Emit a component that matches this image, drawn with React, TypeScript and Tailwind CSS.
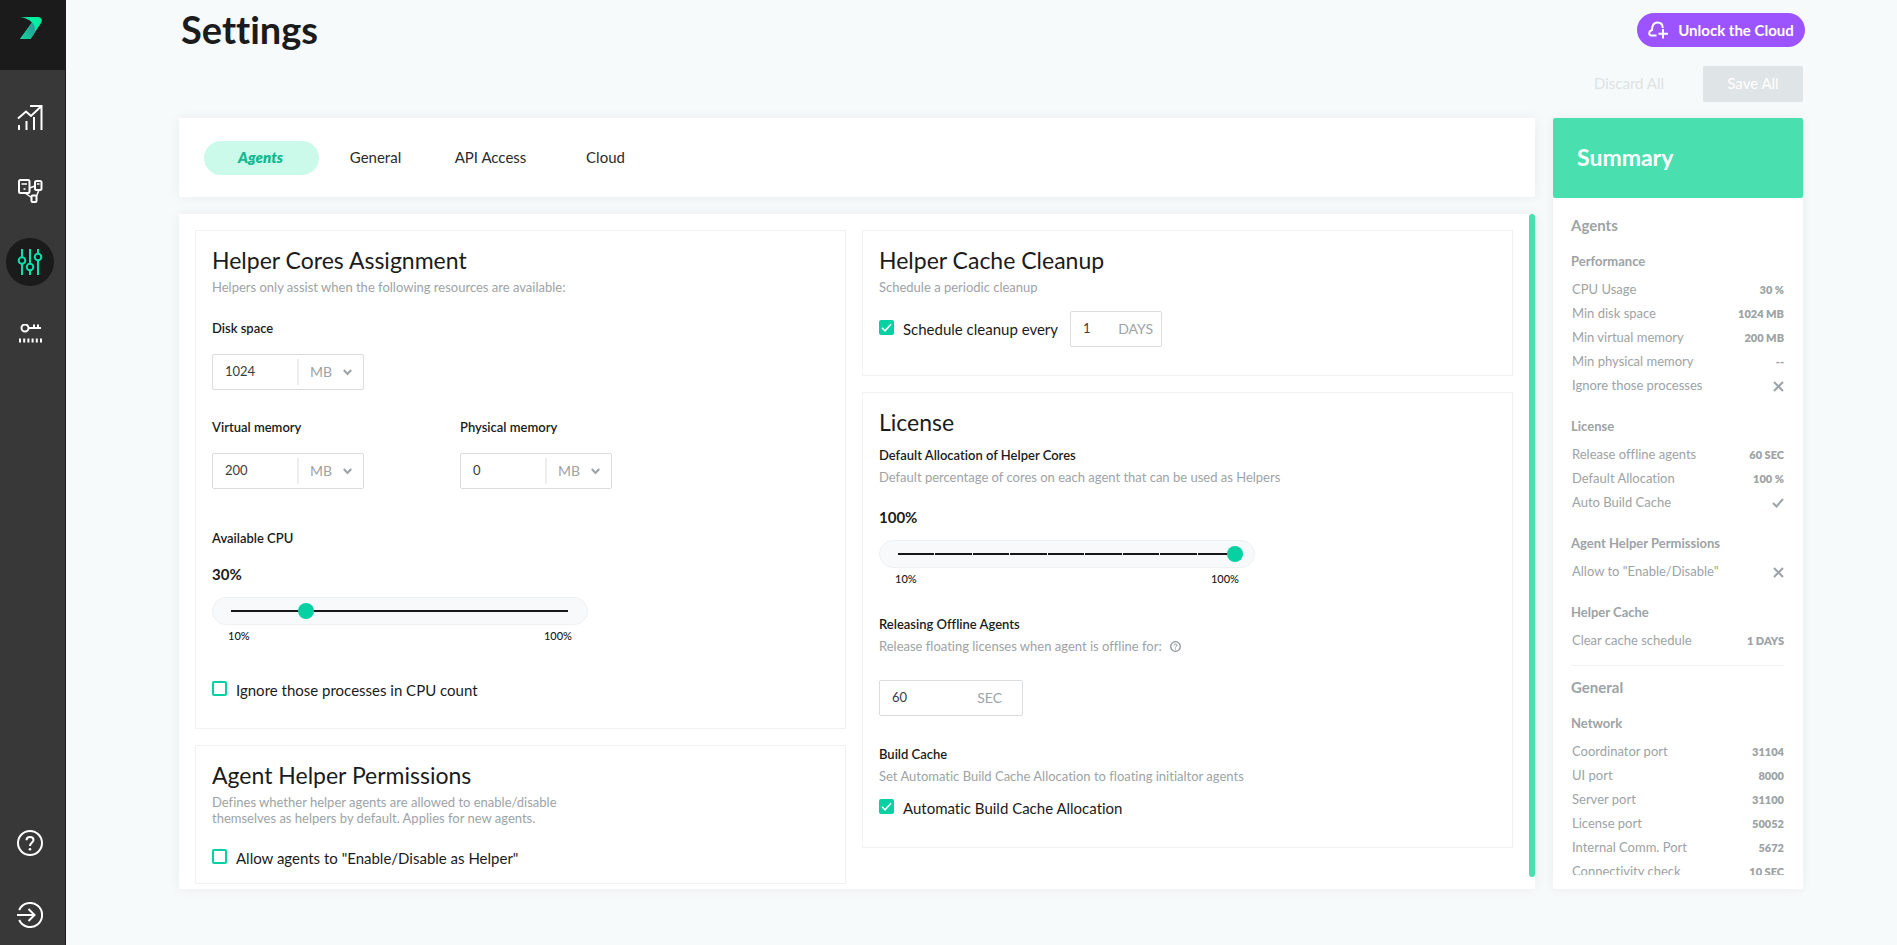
import { useState } from 'react';
import type { ReactNode } from 'react';

type SummaryRow = {
  label: string;
  value: string;
}

type SummaryGroup = {
  title: string;
  rows: SummaryRow[];
}

const agentGroups: SummaryGroup[] = [
  {
    title: 'Performance',
    rows: [
      { label: 'CPU Usage', value: '30 %' },
      { label: 'Min disk space', value: '1024 MB' },
      { label: 'Min virtual memory', value: '200 MB' },
      { label: 'Min physical memory', value: '--' },
      { label: 'Ignore those processes', value: 'off' },
    ],
  },
  {
    title: 'License',
    rows: [
      { label: 'Release offline agents', value: '60 SEC' },
      { label: 'Default Allocation', value: '100 %' },
      { label: 'Auto Build Cache', value: 'on' },
    ],
  },
  {
    title: 'Agent Helper Permissions',
    rows: [{ label: 'Allow to "Enable/Disable"', value: 'off' }],
  },
  {
    title: 'Helper Cache',
    rows: [{ label: 'Clear cache schedule', value: '1 DAYS' }],
  },
];

const generalGroups: SummaryGroup[] = [
  {
    title: 'Network',
    rows: [
      { label: 'Coordinator port', value: '31104' },
      { label: 'UI port', value: '8000' },
      { label: 'Server port', value: '31100' },
      { label: 'License port', value: '50052' },
      { label: 'Internal Comm. Port', value: '5672' },
      { label: 'Connectivity check', value: '10 SEC' },
    ],
  },
];

const tabs = ['Agents', 'General', 'API Access', 'Cloud'];

function Sidebar() {
  return (
    <nav className="flex w-[66px] shrink-0 flex-col border-r border-[#1b1b1b] bg-[#383838] text-white">
      <a href="#" aria-label="Home" className="flex h-[70px] shrink-0 bg-[#1b1b1b] pt-4 pl-[19px]">
        <svg width="23" height="24" viewBox="0 0 23 24">
          <defs>
            <linearGradient id="logoTop" x1="0" y1="0" x2="1" y2="0">
              <stop offset="0" stopColor="#0b9f77" />
              <stop offset="0.4" stopColor="#00f0a0" />
              <stop offset="1" stopColor="#00eda3" />
            </linearGradient>
            <linearGradient id="logoLeg" x1="1" y1="0" x2="0" y2="1">
              <stop offset="0" stopColor="#3a8f9c" />
              <stop offset="0.5" stopColor="#1fb597" />
              <stop offset="1" stopColor="#10dba0" />
            </linearGradient>
          </defs>
          <path d="M0 1H19C22 1 24 4 22 7L11.500 23H1L13 6.500C10 3 5 1.500 0 1Z" fill="url(#logoTop)" />
          <path d="M13 6.500C16 9.500 16.500 13 15.500 17L11.500 23H1Z" fill="url(#logoLeg)" />
        </svg>
      </a>
      <div className="flex flex-1 flex-col items-center pt-6 pr-[5px] pb-[6px]">
        <a href="#" aria-label="Dashboard" className="flex size-12 items-center justify-center">
          <svg width="26" height="26" viewBox="0 0 26 26" fill="none" stroke="currentColor" strokeWidth="2">
            <path d="M1 13.500 9 6.500 14 11 24 1.500M13 1H24.500V25M2 20V25M9.500 16V25M17 12V25" />
          </svg>
        </a>
        <a href="#" aria-label="Agents" className="mt-6 flex size-12 items-center justify-center">
          <svg width="26" height="26" viewBox="0 0 26 26" fill="none" stroke="currentColor" strokeWidth="2">
            <rect x="2" y="3" width="10.500" height="13" rx="1.500" />
            <rect x="18" y="4" width="6.500" height="9" rx="1.500" />
            <rect x="14.500" y="18.500" width="5" height="6.500" rx="1" />
            <path d="M12.500 11 18 9M8 16 14.500 20.500M22 13 19.500 19M4.500 7H10M6.500 12H8.500M20 7H22.500" strokeWidth="1.500" />
          </svg>
        </a>
        <a href="#" aria-label="Settings" className="mt-6 flex size-12 items-center justify-center rounded-full bg-[#1b1b1b] text-[#0be0ad]">
          <svg width="26" height="28" viewBox="0 0 26 28" fill="none" stroke="currentColor" strokeWidth="2">
            <path d="M5 1V9M5 16V27M13 1V15M13 22V27M21 1V6M21 13V27" />
            <circle cx="5" cy="12.500" r="3.300" />
            <circle cx="13" cy="19" r="3.300" />
            <circle cx="21" cy="9" r="3.300" />
          </svg>
        </a>
        <a href="#" aria-label="License" className="mt-6 flex size-12 items-center justify-center">
          <svg width="24" height="20" viewBox="0 0 24 20" fill="none" stroke="currentColor" strokeWidth="2">
            <circle cx="7" cy="4" r="3.500" />
            <path d="M11 4H23M16 4V0.500M20 4V0.500" />
            <path d="M1 16.500H24" strokeWidth="4" strokeDasharray="2 2.200" />
          </svg>
        </a>
        <a href="#" aria-label="Help" className="mt-auto flex size-12 items-center justify-center">
          <svg width="26" height="26" viewBox="0 0 26 26" fill="none" stroke="currentColor" strokeWidth="2">
            <circle cx="13" cy="13" r="12" />
            <path d="M9.500 10.200C9.500 8 11 6.900 13 6.900S16.500 8.100 16.500 10C16.500 12.500 13 12.500 13 16" />
            <circle cx="13" cy="19.200" r="1.300" fill="currentColor" stroke="none" />
          </svg>
        </a>
        <a href="#" aria-label="Log out" className="mt-6 flex size-12 items-center justify-center">
          <svg width="26" height="26" viewBox="0 0 26 26" fill="none" stroke="currentColor" strokeWidth="2">
            <path d="M2.200 8A12 12 0 1 1 2.200 18M0 13H17M11.500 7 17.500 13 11.500 19" />
          </svg>
        </a>
      </div>
    </nav>
  );
}

function Panel({ title, className, children }: { title: string; className: string; children: ReactNode }) {
  return (
    <section className={`border border-[#eff1f2] px-4 pt-[15px] ${className}`}>
      <h2 className="text-[23px] leading-7">{title}</h2>
      {children}
    </section>
  );
}

function Hint({ children }: { children: ReactNode }) {
  return <p className="text-[13px] leading-4 text-[#9da3a6]">{children}</p>;
}

function SizeField({ id, label, initial }: { id: string; label: string; initial: string }) {
  const [value, setValue] = useState(initial);

  return (
    <div className="w-[152px]">
      <label htmlFor={id} className="block text-[13px] leading-4 font-semibold">{label}</label>
      <div className="mt-[18px] flex h-9 items-center rounded-xs border border-[#d9dde0]">
        <input
          id={id}
          value={value}
          onChange={(e) => setValue(e.target.value)}
          className="w-[84px] pl-3 text-[13px] text-[#3c3c3c] outline-none"
        />
        <div className="relative flex h-[26px] flex-1 items-center border-l-2 border-[#eceeef] text-[#9da3a6]">
          <select aria-label={`${label} unit`} className="w-full appearance-none pl-[11px] text-sm outline-none">
            <option>MB</option>
            <option>GB</option>
          </select>
          <svg className="pointer-events-none absolute right-[11px]" width="9" height="7" viewBox="0 0 9 7" fill="none" stroke="currentColor" strokeWidth="2">
            <path d="M0.800 1 4.500 5 8.200 1" />
          </svg>
        </div>
      </div>
    </div>
  );
}

function UnitField({ label, initial, unit, className }: { label: string; initial: string; unit: string; className: string }) {
  const [value, setValue] = useState(initial);

  return (
    <div className={`flex h-9 items-center rounded-xs border border-[#d9dde0] pl-3 ${className}`}>
      <input
        aria-label={label}
        value={value}
        onChange={(e) => setValue(e.target.value)}
        className="w-0 flex-1 text-[13px] text-[#3c3c3c] outline-none"
      />
      <span className="text-sm text-[#9da3a6]">{unit}</span>
    </div>
  );
}

function CheckField({ label, initial = false }: { label: string; initial?: boolean }) {
  const [checked, setChecked] = useState(initial);

  return (
    <label className="flex w-fit items-start gap-[9px] text-[15px] leading-[18px]">
      <span className="relative flex">
        <input
          type="checkbox"
          checked={checked}
          onChange={() => setChecked(!checked)}
          className="size-[15px] appearance-none rounded-xs border-2 border-[#06d1a3] checked:bg-[#06d1a3]"
        />
        {checked && (
          <svg className="pointer-events-none absolute inset-0" width="15" height="15" viewBox="0 0 15 15" fill="none" stroke="white" strokeWidth="1.500">
            <path d="M3 7.800 6 10.800 12 4.200" />
          </svg>
        )}
      </span>
      {label}
    </label>
  );
}

function PercentSlider({ label, initial, ticks = false }: { label: string; initial: number; ticks?: boolean }) {
  const [value, setValue] = useState(initial);

  return (
    <div className="w-[376px]">
      <output className="block text-[15px] leading-[18px] font-bold">{value}%</output>
      <div className="mt-[14px] flex h-7 items-center rounded-full border border-[#eef1f2] bg-[#f7f9fa] pr-[11px] pl-2.5">
        <input
          type="range"
          aria-label={label}
          min={10}
          max={100}
          step={10}
          value={value}
          onChange={(e) => setValue(Number(e.target.value))}
          className={`h-4 w-full appearance-none bg-[length:calc(100%-16px)_2px] bg-center bg-no-repeat [&::-webkit-slider-thumb]:size-4 [&::-webkit-slider-thumb]:appearance-none [&::-webkit-slider-thumb]:rounded-full [&::-webkit-slider-thumb]:bg-[#06d1a3] ${
            ticks
              ? 'bg-[repeating-linear-gradient(to_right,#171717_0,#171717_calc(11.11%-1px),#f7f9fa_calc(11.11%-1px),#f7f9fa_11.11%)]'
              : 'bg-[linear-gradient(#171717,#171717)]'
          }`}
        />
      </div>
      <div className="mt-[3px] flex justify-between px-4 text-[11px] leading-4 font-medium">
        <span>10%</span>
        <span>100%</span>
      </div>
    </div>
  );
}

function SummaryValue({ value }: { value: string }) {
  if (value === 'off') {
    return (
      <svg role="img" aria-label="Off" width="11" height="11" viewBox="0 0 11 11" fill="none" stroke="currentColor" strokeWidth="2">
        <path d="M1 1 10 10M10 1 1 10" />
      </svg>
    );
  }
  if (value === 'on') {
    return (
      <svg role="img" aria-label="On" width="12" height="10" viewBox="0 0 12 10" fill="none" stroke="currentColor" strokeWidth="2">
        <path d="M1 5 4.500 8.500 11 1" />
      </svg>
    );
  }
  return <>{value}</>;
}

function SummarySection({ title, groups }: { title: string; groups: SummaryGroup[] }) {
  return (
    <div>
      <h3 className="text-[15px] leading-6 font-bold">{title}</h3>
      <div className="mt-3 flex flex-col gap-4">
        {groups.map((group) => (
          <div key={group.title}>
            <h4 className="mb-[5px] text-[13px] leading-6 font-bold">{group.title}</h4>
            <dl>
              {group.rows.map((row) => (
                <div key={row.label} className="flex h-6 items-center justify-between pl-px">
                  <dt className="text-[13px]">{row.label}</dt>
                  <dd className="text-[11px] font-extrabold"><SummaryValue value={row.value} /></dd>
                </div>
              ))}
            </dl>
          </div>
        ))}
      </div>
    </div>
  );
}

export default function App() {
  const [activeTab, setActiveTab] = useState('Agents');

  return (
    <div className="flex h-screen bg-[#f6fafb] font-['Lato',sans-serif] text-[#1b1b1b] [font-variant-ligatures:none]">
      <Sidebar />
      <main className="flex min-w-0 flex-1 flex-col pr-[94px] pb-14 pl-[113px]">
        <header className="flex items-start justify-between pt-2 pl-0.5">
          <h1 className="text-[38px] leading-[42px] font-bold">Settings</h1>
          <button className="mt-[5px] -mr-0.5 flex h-[34px] w-[168px] items-center justify-center gap-2.5 rounded-full bg-[#9b54ff] text-[15px] leading-4 font-bold text-white">
            <svg width="20" height="18" viewBox="0 0 20 18" fill="none" stroke="currentColor" strokeWidth="2">
              <path d="M8.500 14.500H3.500C1.500 14.500 1 12.800 1.300 11.500C1.600 10 3 9.300 4 9C4 5 5.500 1.500 9.500 1.500C13 1.500 14.700 4 14.800 7M15 8V17.500M10.500 12.700H20" />
            </svg>
            Unlock the Cloud
          </button>
        </header>
        <div className="mt-4 flex justify-end gap-6">
          <button disabled className="h-9 w-[100px] pb-0.5 text-[15px] text-[#dde2e4]">Discard All</button>
          <button disabled className="h-9 w-[100px] rounded-xs bg-[#dfe4e6] pb-0.5 text-[15px] text-white">Save All</button>
        </div>

        <div className="mt-4 flex min-h-0 flex-1 gap-[18px]">
          <div className="flex min-w-0 flex-1 flex-col gap-[17px]">
            <div className="flex h-[79px] shrink-0 items-center bg-white pl-[25px] shadow-[0_0_12px_rgba(0,0,0,0.06)]">
              {tabs.map((tab) => (
                <button
                  key={tab}
                  onClick={() => setActiveTab(tab)}
                  className={`h-[34px] w-[115px] rounded-full pr-0.5 text-[15px] ${tab === activeTab ? 'bg-[#ccfaea] font-extrabold text-[#12b892] italic' : 'text-[#2b2b2b]'}`}
                >
                  {tab}
                </button>
              ))}
            </div>

            <div className="flex min-h-0 flex-1 bg-white shadow-[0_0_12px_rgba(0,0,0,0.06)]">
              <div className="grid min-w-0 flex-1 grid-cols-2 items-start gap-4 overflow-y-auto pt-4 pl-4 [scrollbar-width:none]">
                <div className="flex flex-col gap-4">
                  <Panel title="Helper Cores Assignment" className="pb-[29px]">
                    <div className="mt-[5px]">
                      <Hint>Helpers only assist when the following resources are available:</Hint>
                    </div>
                    <div className="mt-[25px]">
                      <SizeField id="disk" label="Disk space" initial="1024" />
                    </div>
                    <div className="mt-[29px] flex gap-24">
                      <SizeField id="virtual" label="Virtual memory" initial="200" />
                      <SizeField id="physical" label="Physical memory" initial="0" />
                    </div>
                    <h3 className="mt-[41px] mb-[19px] text-[13px] leading-4 font-semibold">Available CPU</h3>
                    <PercentSlider label="Available CPU" initial={30} />
                    <div className="mt-[37px]">
                      <CheckField label="Ignore those processes in CPU count" />
                    </div>
                  </Panel>

                  <Panel title="Agent Helper Permissions" className="pb-4">
                    <div className="mt-[5px] mb-[23px] w-[350px]">
                      <Hint>Defines whether helper agents are allowed to enable/disable themselves as helpers by default. Applies for new agents.</Hint>
                    </div>
                    <CheckField label={'Allow agents to "Enable/Disable as Helper"'} />
                  </Panel>
                </div>

                <div className="flex flex-col gap-4">
                  <Panel title="Helper Cache Cleanup" className="pb-7">
                    <div className="mt-[5px]">
                      <Hint>Schedule a periodic cleanup</Hint>
                    </div>
                    <div className="mt-4 flex items-center gap-3">
                      <CheckField label="Schedule cleanup every" initial />
                      <UnitField label="Cleanup interval" initial="1" unit="DAYS" className="w-[92px] pr-2" />
                    </div>
                  </Panel>

                  <Panel title="License" className="pb-[30px]">
                    <h3 className="mt-[11px] mb-1.5 text-[13px] leading-4 font-semibold">Default Allocation of Helper Cores</h3>
                    <Hint>Default percentage of cores on each agent that can be used as Helpers</Hint>
                    <div className="mt-[23px]">
                      <PercentSlider label="Default Allocation of Helper Cores" initial={100} ticks />
                    </div>
                    <h3 className="mt-[29px] mb-1.5 text-[13px] leading-4 font-semibold">Releasing Offline Agents</h3>
                    <div className="flex items-center gap-2">
                      <Hint>Release floating licenses when agent is offline for:</Hint>
                      <svg className="text-[#8d9396]" width="11" height="11" viewBox="0 0 11 11" fill="none" stroke="currentColor">
                        <circle cx="5.500" cy="5.500" r="4.800" strokeWidth="1.300" />
                        <path d="M4 4.500C4 3.500 4.600 3 5.500 3S7 3.500 7 4.300C7 5.300 5.500 5.300 5.500 6.500M5.500 7.500V8.500" />
                      </svg>
                    </div>
                    <UnitField label="Release timeout" initial="60" unit="SEC" className="mt-[26px] w-36 pr-5" />
                    <h3 className="mt-[30px] mb-1.5 text-[13px] leading-4 font-semibold">Build Cache</h3>
                    <Hint>Set Automatic Build Cache Allocation to floating initialtor agents</Hint>
                    <div className="mt-[15px]">
                      <CheckField label="Automatic Build Cache Allocation" initial />
                    </div>
                  </Panel>
                </div>
              </div>
              <div className="mb-3 ml-4 w-1.5 rounded-full bg-[#49dfae]" />
            </div>
          </div>

          <aside className="flex w-[250px] shrink-0 flex-col rounded-xs bg-white pb-[14px] shadow-[0_0_12px_rgba(0,0,0,0.06)]">
            <h2 className="flex h-20 shrink-0 items-center rounded-xs bg-[#49dfae] pb-0.5 pl-6 text-[23px] font-bold text-white">Summary</h2>
            <div className="min-h-0 flex-1 overflow-y-auto pt-[15px] pr-[19px] pl-[18px] text-[#9da3a6] [scrollbar-width:none]">
              <SummarySection title="Agents" groups={agentGroups} />
              <hr className="mt-3 mb-[9px] border-[#eff1f2]" />
              <SummarySection title="General" groups={generalGroups} />
            </div>
          </aside>
        </div>
      </main>
    </div>
  );
}
